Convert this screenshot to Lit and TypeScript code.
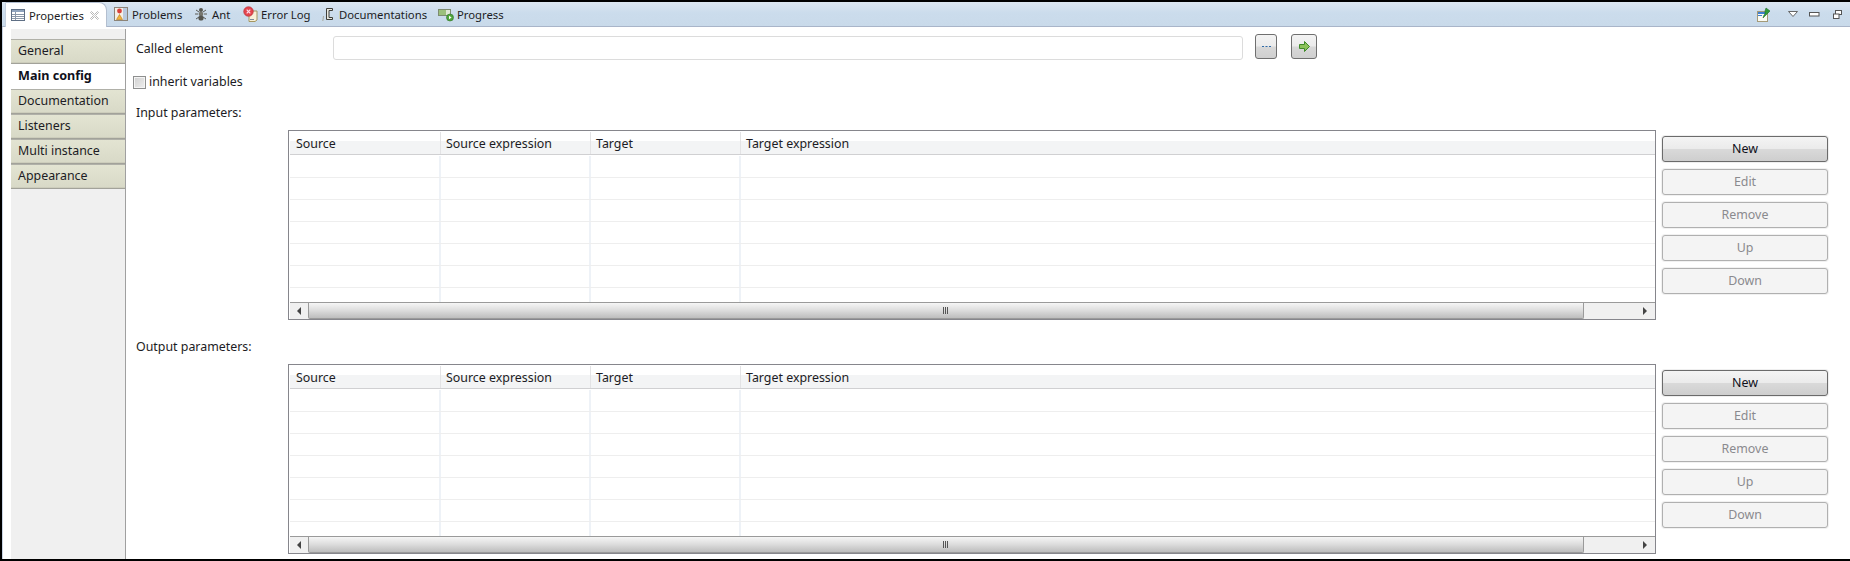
import { LitElement, html, css, svg } from "lit";
import { customElement } from "lit/decorators.js";

const icons: Record<string, unknown> = {
  properties: svg`<rect x="1.5" y="2.5" width="13" height="11" fill="#fff" stroke="#5f6f85"/><rect x="2" y="3" width="12" height="2" fill="#8fa3bd"/><path d="M2 7.5h12M2 9.5h12M2 11.5h12M5.5 5v8" stroke="#8a97a8" fill="none"/>`,
  problems: svg`<rect x="1.5" y="1.5" width="13" height="13" fill="#f4efe6" stroke="#8c8478"/><rect x="10" y="2" width="4" height="12" fill="#b9c9de"/><circle cx="6.500" cy="5" r="2.400" fill="#d8423c"/><path d="M6.500 8.500l3 5h-6z" fill="#f2b33d" stroke="#b87a18" stroke-width=".6"/>`,
  ant: svg`<g stroke="#5b5b55" stroke-width="1" fill="none"><path d="M3 4l3 2M13 4l-3 2M2 8h3M14 8h-3M3 13l3-2M13 13l-3-2"/></g><ellipse cx="8" cy="4" rx="2" ry="2" fill="#55554f"/><ellipse cx="8" cy="8" rx="2.400" ry="2.200" fill="#77776f"/><ellipse cx="8" cy="12" rx="2.600" ry="2.600" fill="#55554f"/>`,
  error: svg`<path d="M7 5h8v9l-2 1.500H7z" fill="#f7f0d8" stroke="#a59660"/><path d="M8 13.500h4" stroke="#7c8a9c"/><circle cx="6.500" cy="5.500" r="4.800" fill="#e3454d" stroke="#b52a33" stroke-width=".6"/><path d="M4.700 3.700l3.600 3.600M8.300 3.700l-3.600 3.600" stroke="#fde" stroke-width="1.200"/>`,
  doc: svg`<path d="M6.500 2.500h6v2h-3.500v7h3.500v2h-6z" fill="#e8e8e0" stroke="#3f3f3a"/><path d="M3.500 10l-.7 5" stroke="#a8a89c"/>`,
  progress: svg`<rect x="0.500" y="3.500" width="12" height="6" fill="#9bc07c" stroke="#7d8c70"/><rect x="8" y="4" width="4" height="5" fill="#dfe7d6"/><circle cx="12" cy="11.500" r="3.500" fill="#4fa53c" stroke="#2f7426" stroke-width=".6"/><path d="M11 9.800l2.600 1.700-2.600 1.700z" fill="#fff"/>`,
};

@customElement("app-root")
export class AppRoot extends LitElement {
  static styles = css`
    :host { display: block; width: 1850px; height: 561px; box-sizing: border-box; border-top: 2px solid #000; border-bottom: 2px solid #000; border-left: 2px solid #000; background: #fff; overflow: hidden;
      font-family: "Noto Sans", "Open Sans", sans-serif; font-size: 12.4px; color: #1c1c24; }
    .bar { height: 25px; box-sizing: border-box; display: grid; grid-template-columns: 3px 102px 6px 80px 49px 78px 118px 72px 1fr auto; border-bottom: 1px solid #a9b5c9; background: linear-gradient(#dbe6f1, #cbdcec 45%, #c9daea); font-size: 11.3px; }
    .tab { display: flex; align-items: center; gap: 3px; height: 24px; white-space: nowrap; }
    .tab svg { flex: none; }
    .active { background: #fff; border: 1px solid #b3bfd0; border-bottom: none; border-left-color: #c6d0dd; border-radius: 0 8px 0 0; box-sizing: border-box; height: 25px; padding: 0 6px 0 4px; gap: 3px; }
    .close { margin-left: auto; }
    .views { display: flex; align-items: center; padding-right: 8px; }
    .pin { margin-right: 16px; }
    .menu { margin-right: 10px; }
    .min { margin-right: 13px; }
    .body { height: 532px; display: grid; grid-template-columns: 115px 1fr; box-sizing: border-box; border-left: 1px solid #c9d4e4; padding: 2px 0 0 8px; }
    .side { background: #f0f0f0; border-right: 1px solid #a0a0a0; padding-top: 10px; }
    .item { height: 25px; box-sizing: border-box; padding: 0 0 2px 7px; display: flex; align-items: center; border-top: 1px solid #b0b0a8; border-bottom: 1px solid #a2a29a; box-shadow: inset 0 -1px 0 #cdcdbc; background: linear-gradient(#e3e4d2, #d8d9c7); }
    .item.sel { background: #fff; border-color: #fff; box-shadow: none; font-weight: 700; font-size: 12.6px; color: #10101a; padding: 0 0 3px 7px; }
    .main { display: flex; flex-direction: column; padding: 5px 0 0 7px; }
    .row1 { display: flex; align-items: center; height: 25px; padding-left: 3px; }
    .row1 label { width: 197px; flex: none; margin-top: 4px; }
    .input { width: 910px; height: 24px; margin-top: 2px; box-sizing: border-box; border: 1px solid #dcdcdc; border-radius: 3px; background: #fff; margin-right: 12px; }
    .mini { height: 25px; box-sizing: border-box; border: 1px solid #6f6f6f; border-radius: 3px; display: flex; align-items: center; justify-content: center; background: linear-gradient(#f3f3f3, #ebebeb 48%, #d8d8d8 52%, #cfcfcf); }
    .dots { width: 22px; margin-right: 14px; }
    .go { width: 26px; }
    .check { display: flex; align-items: center; gap: 3px; margin-top: 17px; height: 13px; }
    .check span { padding-bottom: 2px; }
    .box { width: 13px; height: 13px; box-sizing: border-box; border: 1px solid #8e8f8f; background: linear-gradient(135deg, #d0d0d0, #eeeeee); box-shadow: inset 0 0 0 1px #f4f4f4; }
    .sect { padding: 0 0 1px 3px; box-sizing: border-box; height: 20px; display: flex; align-items: center; }
    .first { margin-top: 14px; }
    .second { margin-top: 17px; }
    .grp { display: flex; margin: 7px 0 0 155px; }
    .table { width: 1368px; height: 190px; box-sizing: border-box; border: 1px solid #86868c; padding-top: 1px; display: flex; flex-direction: column; }
    .head { display: grid; grid-template-columns: 151px 150px 150px 1fr; flex: none; height: 23px; margin-left: 1px; border-bottom: 1px solid #d0d0d2; box-sizing: border-box; background: linear-gradient(#fff 0, #fff 9px, #f3f4f5 9px, #f3f4f5); }
    .head div { display: flex; align-items: center; padding: 0 0 0 5px; border-right: 1px solid #e3e3e5; }
    .head div:first-child { padding-left: 6px; }
    .head div:last-child { border-right: none; }
    .rows { height: 147px; box-sizing: border-box; padding-top: 1px; overflow: hidden; flex: none; margin-left: 1px; }
    .r { display: grid; grid-template-columns: 151px 150px 150px 1fr; height: 22px; box-sizing: border-box; border-bottom: 1px solid #eeeeee; }
    .r div { border-right: 2px solid #eef2f7; }
    .r div:last-child { border-right: none; }
    .sb { height: 17px; flex: none; box-sizing: border-box; margin-left: 1px; border-top: 1px solid #9a9a9a; background: #f0f0f0; display: flex; align-items: stretch; }
    .arrow { width: 18px; display: flex; align-items: center; justify-content: center; flex: none; }
    .thumb { width: 1276px; flex: none; box-sizing: border-box; border: 1px solid #9a9a9a; border-top: none; border-radius: 0 0 2px 2px; background: linear-gradient(#f6f6f6, #dcdcdc 50%, #bdbdbd); display: flex; align-items: center; justify-content: center; }
    .track { flex: 1; }
    .end { width: 17px; margin-right: 2px; }
    .btns { display: flex; flex-direction: column; gap: 7px; margin: 6px 0 0 6px; }
    .b { width: 166px; height: 26px; box-sizing: border-box; border-radius: 3px; display: flex; align-items: center; justify-content: center; padding-bottom: 2px; }
    .b.on { border: 1px solid #6b6b6b; color: #10101a; background: linear-gradient(#f4f4f4, #ebebeb 48%, #d9d9d9 52%, #cecece); box-shadow: 0 0 0 1px #efefef; }
    .b.off { border: 1px solid #b0b0b0; color: #8a8a8e; background: #f4f4f4; box-shadow: 0 0 0 1px #f1f1f1; }
  `;

  private icon(name: string) {
    return html`<svg width="16" height="16" viewBox="0 0 16 16">${icons[name]}</svg>`;
  }

  private group(label: string, cls: string) {
    const cols = ["Source", "Source expression", "Target", "Target expression"];
    return html`
      <div class="sect ${cls}">${label}</div>
      <div class="grp">
        <div class="table">
          <div class="head">${cols.map((c) => html`<div>${c}</div>`)}</div>
          <div class="rows">
            ${[0, 1, 2, 3, 4, 5, 6].map(() => html`<div class="r"><div></div><div></div><div></div><div></div></div>`)}
          </div>
          <div class="sb">
            <div class="arrow"><svg width="6" height="8" viewBox="0 0 6 8"><path d="M5 0v8L1 4z" fill="#444"/></svg></div>
            <div class="thumb"><svg width="8" height="7" viewBox="0 0 8 7"><path d="M1.500 0v7M3.500 0v7M5.500 0v7" stroke="#555" fill="none"/></svg></div>
            <div class="track"></div>
            <div class="arrow end"><svg width="6" height="8" viewBox="0 0 6 8"><path d="M1 0v8l4-4z" fill="#444"/></svg></div>
          </div>
        </div>
        <div class="btns">
          <div class="b on">New</div>
          <div class="b off">Edit</div>
          <div class="b off">Remove</div>
          <div class="b off">Up</div>
          <div class="b off">Down</div>
        </div>
      </div>
    `;
  }

  render() {
    const items = ["General", "Main config", "Documentation", "Listeners", "Multi instance", "Appearance"];
    return html`
      <div class="bar">
        <div></div>
        <div class="tab active">${this.icon("properties")}<span>Properties</span>
          <svg class="close" width="11" height="11" viewBox="0 0 11 11"><path d="M1.500 2.500l1-1L5.500 4.500l3-3 1 1-3 3 3 3-1 1-3-3-3 3-1-1 3-3z" fill="#fff" stroke="#a6a6a6" stroke-width=".8"/></svg>
        </div>
        <div></div>
        <div class="tab">${this.icon("problems")}<span>Problems</span></div>
        <div class="tab">${this.icon("ant")}<span>Ant</span></div>
        <div class="tab">${this.icon("error")}<span>Error Log</span></div>
        <div class="tab">${this.icon("doc")}<span>Documentations</span></div>
        <div class="tab">${this.icon("progress")}<span>Progress</span></div>
        <div></div>
        <div class="views">
          <svg class="pin" width="16" height="16" viewBox="0 0 16 16"><rect x="1.500" y="4.500" width="10" height="10" fill="#fbfbf4" stroke="#a49a78"/><rect x="2" y="5" width="9" height="2" fill="#3f7fd0"/><path d="M2 8.500h4" stroke="#3f7fd0"/><path d="M10 1l4 3-3 3-1 1-1 1-2 2 1-3 1-1 0-3z" fill="#2f9a3a" stroke="#1d6e28" stroke-width=".6"/></svg>
          <svg class="menu" width="11" height="7" viewBox="0 0 11 7"><path d="M.5.500h9l-4.500 5z" fill="#fff" stroke="#666"/></svg>
          <svg class="min" width="11" height="5" viewBox="0 0 11 5"><rect x=".5" y=".5" width="9.500" height="3.500" fill="#fff" stroke="#555"/></svg>
          <svg width="9" height="9" viewBox="0 0 9 9"><rect x="2.500" y=".5" width="6" height="4" fill="#fff" stroke="#555"/><rect x=".5" y="4" width="5.500" height="4.500" fill="#fff" stroke="#555"/></svg>
        </div>
      </div>
      <div class="body">
        <div class="side">
          ${items.map((t, i) => html`<div class="item ${i === 1 ? "sel" : ""}">${t}</div>`)}
        </div>
        <div class="main">
          <div class="row1">
            <label>Called element</label>
            <div class="input"></div>
            <div class="mini dots"><svg width="9" height="2" viewBox="0 0 9 2"><path d="M0 .5h2M3.500 .5h2M7 .5h2" stroke="#2e6aa8" fill="none"/></svg></div>
            <div class="mini go"><svg width="11" height="11" viewBox="0 0 11 11"><path d="M.5 3.500h5v-3l5 5-5 5v-3h-5z" fill="#8cc25a" stroke="#3f8a28"/></svg></div>
          </div>
          <div class="check"><div class="box"></div><span>inherit variables</span></div>
          ${this.group("Input parameters:", "first")}
          ${this.group("Output parameters:", "second")}
        </div>
      </div>
    `;
  }
}
